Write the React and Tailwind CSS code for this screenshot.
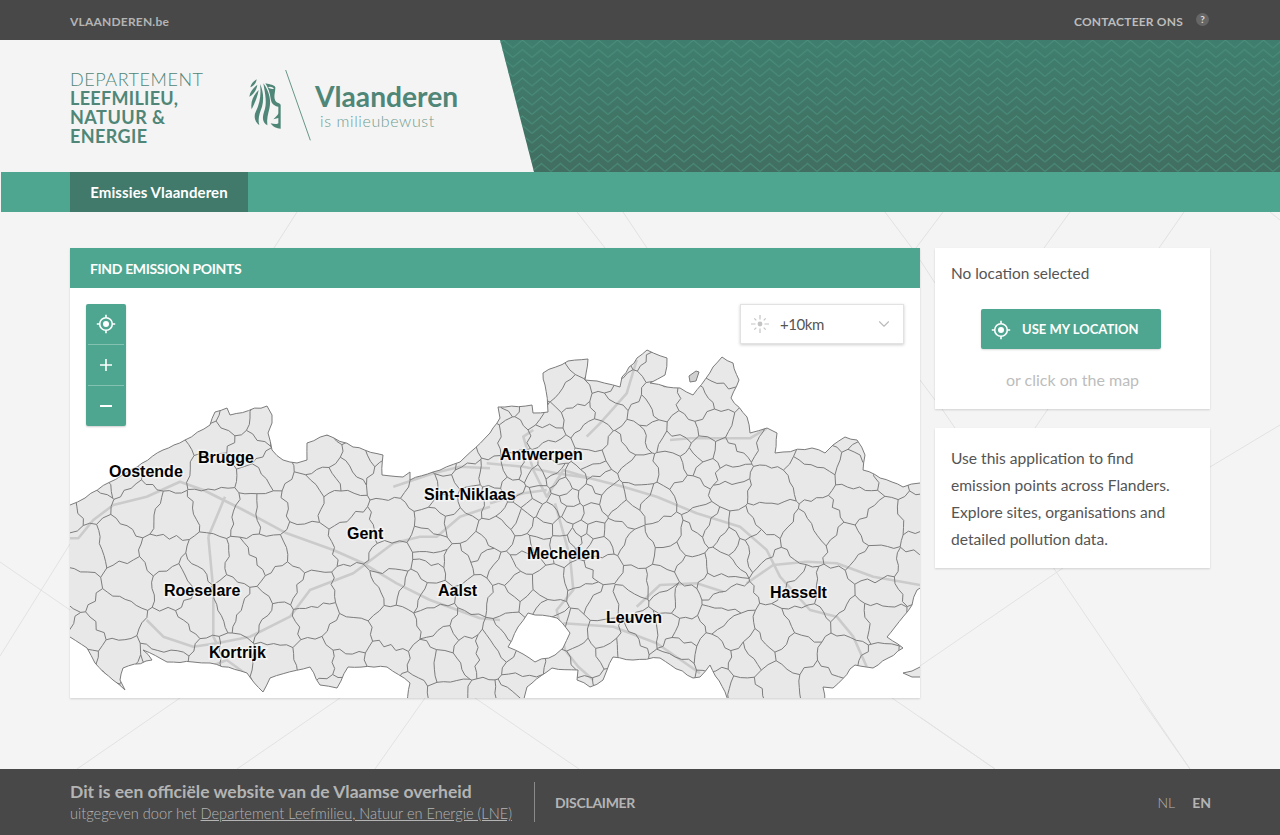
import React from "react";
import { ChevronDown } from "lucide-react";

function mulberry(a) {
  return () => {
    a |= 0; a = (a + 0x6d2b79f5) | 0;
    let t = Math.imul(a ^ (a >>> 15), 1 | a);
    t = (t + Math.imul(t ^ (t >>> 7), 61 | t)) ^ t;
    return ((t ^ (t >>> 14)) >>> 0) / 4294967296;
  };
}

const OUTLINE = [[70,505],[85,498],[110,482],[137,467],[163,450],[185,440],[210,425],[215,412],[227,408],[230,415],[267,406],[272,415],[272,423],[268,433],[272,450],[283,460],[297,463],[307,460],[307,443],[327,435],[353,447],[383,455],[382,475],[403,477],[410,472],[410,480],[433,472],[460,462],[490,433],[500,418],[498,407],[532,405],[533,413],[548,412],[545,385],[543,373],[568,361],[588,359],[585,380],[597,381],[620,387],[622,377],[637,358],[647,350],[667,358],[665,375],[650,383],[667,387],[680,388],[693,395],[713,367],[722,357],[733,363],[739,380],[731,398],[747,417],[750,433],[767,428],[777,433],[775,453],[783,452],[812,448],[825,453],[833,445],[845,437],[857,440],[865,455],[863,470],[892,482],[903,487],[920,483],[925,483],[925,585],[917,590],[912,605],[895,627],[887,637],[903,648],[873,668],[855,665],[833,688],[823,687],[825,703],[730,703],[710,665],[700,677],[693,678],[660,658],[633,660],[613,657],[607,670],[603,680],[590,687],[577,680],[578,670],[552,668],[527,687],[523,703],[407,703],[410,683],[387,667],[348,667],[337,688],[320,685],[310,667],[270,678],[263,692],[247,673],[210,663],[193,662],[167,662],[143,650],[152,660],[123,668],[120,680],[125,690],[113,680],[95,663],[87,648],[70,637],[65,637],[65,505]];
const HOLE = [[528,613],[557,618],[570,633],[563,648],[555,655],[535,662],[523,654],[508,647],[518,627]];
const ISLAND = [[903,673],[912,671],[920,667],[925,667],[925,677],[912,677]];
const ISLES = [[689,376],[696,371],[699,372],[696,381],[690,382]];

function wobblePath(pts, amp, seed) {
  const r = mulberry(seed);
  let d = "";
  pts.forEach((p, i) => {
    const q = pts[(i + 1) % pts.length];
    d += (i === 0 ? "M" : "L") + p[0] + " " + p[1];
    const len = Math.hypot(q[0] - p[0], q[1] - p[1]);
    const n = Math.floor(len / 6);
    for (let k = 1; k < n; k++) {
      const t = k / n;
      const o = (r() - 0.5) * 2 * amp;
      d += "L" + (p[0] + (q[0] - p[0]) * t - ((q[1] - p[1]) / len) * o).toFixed(1) + " " + (p[1] + (q[1] - p[1]) * t + ((q[0] - p[0]) / len) * o).toFixed(1);
    }
  });
  return d + "Z";
}

function makeCells() {
  const r = mulberry(23);
  const seeds = [];
  const inMed = (x, y) => x > 440 && x < 730 && y > 420 && y < 660;
  const inDense = (x, y) => x > 525 && x < 600 && y > 475 && y < 560;
  for (let y = 335; y < 720; y += 36)
    for (let x = 50; x < 940; x += 38)
      if (!inMed(x, y)) seeds.push([x + (r() - 0.5) * 36, y + (r() - 0.5) * 34]);
  for (let y = 420; y < 660; y += 26)
    for (let x = 440; x < 730; x += 28)
      if (!inDense(x, y)) seeds.push([x + (r() - 0.5) * 26, y + (r() - 0.5) * 24]);
  for (let y = 475; y < 560; y += 17)
    for (let x = 525; x < 600; x += 17)
      seeds.push([x + (r() - 0.5) * 14, y + (r() - 0.5) * 14]);
  const edges = new Map();
  seeds.forEach((s, i) => {
    let poly = [[40, 320], [950, 320], [950, 720], [40, 720]];
    seeds.forEach((o, j) => {
      if (i === j) return;
      const mx = (s[0] + o[0]) / 2, my = (s[1] + o[1]) / 2;
      const nx = o[0] - s[0], ny = o[1] - s[1];
      const side = (p) => (p[0] - mx) * nx + (p[1] - my) * ny;
      const out = [];
      poly.forEach((p, k) => {
        const q = poly[(k + 1) % poly.length];
        const a = side(p), b = side(q);
        if (a <= 0) out.push(p);
        if ((a < 0 && b > 0) || (a > 0 && b < 0)) {
          const t = a / (a - b);
          out.push([p[0] + (q[0] - p[0]) * t, p[1] + (q[1] - p[1]) * t]);
        }
      });
      poly = out;
    });
    poly.forEach((p, k) => {
      const q = poly[(k + 1) % poly.length];
      const a = p[0].toFixed(1) + "," + p[1].toFixed(1);
      const b = q[0].toFixed(1) + "," + q[1].toFixed(1);
      if (a === b) return;
      const key = a < b ? a + "|" + b : b + "|" + a;
      if (!edges.has(key)) edges.set(key, [p, q]);
    });
  });
  let d = "";
  edges.forEach(([p, q]) => {
    const len = Math.hypot(q[0] - p[0], q[1] - p[1]);
    const n = Math.max(1, Math.floor(len / 6));
    d += "M" + p[0].toFixed(1) + " " + p[1].toFixed(1);
    for (let k = 1; k <= n; k++) {
      const t = k / n;
      const o = k === n ? 0 : (r() - 0.5) * 5.5;
      d += "L" + (p[0] + (q[0] - p[0]) * t - ((q[1] - p[1]) / len) * o).toFixed(1) + " " + (p[1] + (q[1] - p[1]) * t + ((q[0] - p[0]) / len) * o).toFixed(1);
    }
  });
  return d;
}

const z3 = (a) => a.map(([x, y]) => [x / 3 + 70, y / 3 + 290]);
const z4 = (a) => a.map(([x, y]) => [x / 3 + 490, y / 3 + 290]);
const line = (a) => "M" + a.map((p) => p[0].toFixed(1) + " " + p[1].toFixed(1)).join("L");
const ROADS = [
  z3([[0,745],[25,745],[70,690],[130,645],[230,620],[330,575],[400,600],[520,660],[650,730],[790,780],[880,820],[980,880],[1080,930],[1230,985],[1290,990]]),
  z3([[415,740],[430,900],[430,1040],[440,1060]]),
  z3([[465,620],[440,680],[415,740]]),
  z3([[230,990],[280,1040],[370,1070],[440,1060],[540,1040],[660,980],[720,900],[850,850],[970,760],[1050,740],[1100,740],[1170,680],[1260,650]]),
  z3([[970,590],[1090,550],[1170,530],[1260,535]]),
  z3([[420,1130],[470,1110],[525,1150]]),
  z4([[-10,520],[100,530],[200,550],[300,565],[400,590],[500,620],[620,670],[750,710],[830,780],[870,860],[960,960],[1040,980],[1090,1040],[1130,1130]]),
  z4([[770,880],[850,825],[950,815],[1040,820],[1150,860],[1290,885]]),
  z4([[440,950],[510,885],[620,880],[700,905]]),
  z4([[220,1000],[370,1010],[500,1060],[630,1150]]),
  z4([[440,210],[410,310],[330,400],[290,440]]),
  z4([[540,450],[600,445],[780,445],[830,415]]),
  z4([[195,640],[240,800],[250,900],[200,960],[225,1080],[265,1130],[310,1170]]),
  z4([[130,420],[100,440],[130,540],[170,620],[220,540],[300,565]]),
  z4([[0,640],[100,610],[170,600]]),
];
const CELLS = makeCells();
const OUT_D = wobblePath(OUTLINE, 0.9, 3) + wobblePath(HOLE, 0.9, 4);
const LABELS = [
  ["Oostende", 109, 477], ["Brugge", 198, 463], ["Antwerpen", 500, 460], ["Sint-Niklaas", 424, 500],
  ["Gent", 347, 539], ["Mechelen", 527, 559], ["Roeselare", 164, 596], ["Aalst", 438, 596],
  ["Leuven", 606, 623], ["Hasselt", 770, 598], ["Kortrijk", 209, 658],
];

function MapDrawing() {
  return (
    <svg className="absolute inset-0" width="850" height="410" viewBox="70 288 850 410">
      <defs>
        <clipPath id="fl"><path d={OUT_D} clipRule="evenodd" /></clipPath>
      </defs>
      <path d={OUT_D} fill="#e8e8e8" fillRule="evenodd" />
      <path d={line(ISLAND) + "Z"} fill="#e8e8e8" stroke="#7b7b7b" />
      <path d={line(ISLES) + "Z"} fill="#d0d0d0" stroke="#7b7b7b" />
      <g clipPath="url(#fl)">
        <g fill="none" stroke="#cbcbcb" strokeWidth="2.6" strokeLinejoin="round">
          {ROADS.map((r, i) => <path key={i} d={line(r)} />)}
        </g>
        <path d={CELLS} fill="none" stroke="#7c7c7c" strokeWidth="1" />
      </g>
      <path d={OUT_D} fill="none" stroke="#7c7c7c" strokeWidth="1" />
      {LABELS.map(([t, x, y]) => (
        <text key={t} x={x} y={y} fontFamily="'Liberation Sans', Arial, sans-serif" fontWeight="700" fontSize="16" fill="#000" stroke="#fff" strokeOpacity="0.55" strokeWidth="3" style={{ paintOrder: "stroke" }}>{t}</text>
      ))}
    </svg>
  );
}

function Locate({ className }) {
  return (
    <svg className={className} viewBox="0 0 20 20" fill="none" stroke="currentColor">
      <circle cx="10" cy="10" r="6.3" strokeWidth="1.6" />
      <circle cx="10" cy="10" r="3" fill="currentColor" stroke="none" />
      <path d="M10 0.8V3.5M10 16.5V19.2M0.8 10H3.5M16.5 10H19.2" strokeWidth="1.6" />
    </svg>
  );
}

function Lion() {
  return (
    <svg width="66" height="75" viewBox="24 21 198 225" className="shrink-0" fill="none" stroke="#4f8677" strokeLinecap="round">
      <path d="M137 24L211 235" strokeWidth="2.6" strokeLinecap="butt" />
      <g fill="#4f8677" stroke="none">
        <path d="M50 52C40 58 33 66 31 76C40 72 49 64 50 52Z" />
        <path d="M52 68C40 78 30 90 28 104C40 98 50 84 52 68Z" />
        <path d="M56 84C42 98 30 118 35 142C44 124 52 106 56 84Z" />
        <path d="M60 66C64 96 60 124 47 150C40 164 46 182 58 190C52 170 60 150 66 134C72 112 70 86 60 66Z" />
        <path d="M70 64C76 100 82 124 72 150C66 168 68 182 82 190C80 170 84 156 88 140C94 116 88 88 70 64Z" />
        <path d="M76 64C92 68 102 68 106 76C106 92 100 104 106 116C110 124 122 122 122 130L122 200C110 200 98 194 92 184C100 186 112 188 115 184L115 168L100 172C106 164 115 160 115 152L115 134C104 132 94 126 92 110C90 92 84 76 76 64Z" />
      </g>
      <path d="M84 76C90 72 98 75 102 80C96 82 90 81 84 76Z" fill="#f4f4f4" stroke="none" />
    </svg>
  );
}

function Zigzag() {
  const zig = "L9.5 0L19 8";
  return (
    <svg className="absolute inset-0" width="1280" height="132" viewBox="0 0 1280 132">
      <defs>
        <pattern id="zz" width="19" height="9.5" patternUnits="userSpaceOnUse">
          <g fill="none" stroke="#4a8e7c" strokeWidth="1">
            <path d={"M0 8" + zig} transform="translate(0 -9.5)" />
            <path d={"M0 8" + zig} />
            <path d={"M0 8" + zig} transform="translate(0 9.5)" />
          </g>
        </pattern>
        <linearGradient id="zg" x1="0" x2="0" y1="0" y2="1">
          <stop offset="0" stopColor="#3f7e6e" />
          <stop offset="1" stopColor="#416e60" />
        </linearGradient>
      </defs>
      <polygon points="500,0 1280,0 1280,132 534,132" fill="url(#zg)" />
      <polygon points="500,0 1280,0 1280,132 534,132" fill="url(#zz)" />
    </svg>
  );
}

const BG = [[297,212,274,248],[577,212,605,248],[623,212,647,248],[885,212,912,248],[943,212,916,248],[1070,212,1044,248],[1184,212,1159,248],[1270,212,1290,228],[180,698,77,769],[340,698,237,769],[425,698,375,769],[475,698,579,769],[892,698,995,769],[1140,698,1190,769],[0,562,70,610],[70,544,0,656],[920,666,1063,568],[1040,548,1190,769],[920,717,995,769],[920,260,935,283],[920,380,935,400],[942,409,955,428],[1048,409,1035,428],[1210,467,1280,425]];

export default function App() {
  return (
    <div className="relative flex h-[835px] flex-col overflow-hidden bg-[#f4f4f4] font-['Lato','Noto_Sans',sans-serif] text-[#555]">
      <svg className="absolute inset-0" width="1280" height="835">
        {BG.map((l, i) => <line key={i} x1={l[0]} y1={l[1]} x2={l[2]} y2={l[3]} stroke="#e2e2e2" strokeWidth="1" />)}
      </svg>

      <div className="relative flex h-10 shrink-0 items-center justify-between bg-[#484848] pl-[70px] pr-[71px] pt-[3px]">
        <span className="text-[12px] font-bold tracking-[0.2px] text-[#b4b4b4]">VLAANDEREN.be</span>
        <div className="flex items-center">
          <span className="text-[12px] font-bold tracking-[0.2px] text-[#bcbcbc]">CONTACTEER ONS</span>
          <span className="ml-[13px] mb-[5px] flex h-[13px] w-[13px] items-center justify-center rounded-full bg-[#666] text-[10px] font-bold leading-none text-[#ddd]">?</span>
        </div>
      </div>

      <div className="relative flex h-[132px] shrink-0 items-center bg-[#f4f4f4] pl-[70px]">
        <Zigzag />
        <div className="relative mt-[3px] w-[178px] text-[18px] leading-[19px] text-[#4f8677]">
          <div className="font-light tracking-[0.55px]">DEPARTEMENT</div>
          <div className="font-bold tracking-[0.3px]">LEEFMILIEU,</div>
          <div className="font-bold tracking-[0.5px]">NATUUR &amp;</div>
          <div className="font-bold tracking-[0.4px]">ENERGIE</div>
        </div>
        <div className="relative flex items-center">
          <Lion />
          <div className="ml-[1px] mt-[-3px] text-[#4f8677]">
            <div className="text-[28.2px] font-bold leading-[32px]">Vlaanderen</div>
            <div className="ml-[5px] text-[16px] font-light leading-[18px] tracking-[0.6px] text-[#6f9c90]">is milieubewust</div>
          </div>
        </div>
      </div>

      <div className="relative ml-px flex h-10 shrink-0 bg-[#4ea690] pl-[69px]">
        <div className="flex h-full w-[178px] items-center justify-center bg-[#41796b] text-[15px] font-bold tracking-[0.1px] text-white">Emissies Vlaanderen</div>
      </div>

      <div className="relative flex flex-1 items-start gap-[15px] pl-[70px] pt-9">
        <div className="w-[850px] bg-white shadow-[0_1px_2px_rgba(0,0,0,0.15)]">
          <div className="flex h-10 items-center bg-[#4ea690] px-5 text-[14px] font-bold tracking-[-0.35px] text-white">FIND EMISSION POINTS</div>
          <div className="relative h-[410px]">
            <MapDrawing />
            <div className="absolute left-4 top-4 flex w-10 flex-col rounded-[2px] bg-[#4ea690] text-white shadow-[0_1px_2px_rgba(0,0,0,0.2)]">
              <div className="flex h-10 items-center justify-center"><Locate className="h-5 w-5" /></div>
              <div className="mx-0.5 h-px bg-white/30" />
              <div className="flex h-10 items-center justify-center">
                <svg width="14" height="14" viewBox="0 0 14 14"><path d="M7 1V13M1 7H13" stroke="#fff" strokeWidth="1.6" /></svg>
              </div>
              <div className="mx-0.5 h-px bg-white/30" />
              <div className="flex h-10 items-center justify-center">
                <svg width="14" height="14" viewBox="0 0 14 14"><path d="M1 7H13" stroke="#fff" strokeWidth="2" /></svg>
              </div>
            </div>
            <div className="absolute right-4 top-4 flex h-10 w-[164px] items-center border border-[#e2e2e2] bg-white pl-[10px] pr-[10px] shadow-[0_1px_3px_rgba(0,0,0,0.2)]">
              <svg width="18" height="18" viewBox="0 0 18 18" stroke="#c4c4c4" strokeWidth="1.2">
                <circle cx="9" cy="9" r="2.4" fill="#c4c4c4" stroke="none" />
                <path d="M9 0V4.5M9 13.5V18M0 9H4.5M13.5 9H18M3.3 3.3L5.3 5.3M12.7 12.7L14.7 14.7M14.7 3.3L12.7 5.3M5.3 12.7L3.3 14.7" />
              </svg>
              <span className="ml-[11px] text-[15px] tracking-[-0.45px] text-[#555]">+10km</span>
              <ChevronDown className="ml-auto h-[18px] w-[18px] text-[#bbb]" strokeWidth={1.5} />
            </div>
          </div>
        </div>

        <div className="flex w-[275px] flex-col gap-[19px]">
          <div className="h-[161px] bg-white px-4 pt-3 shadow-[0_1px_2px_rgba(0,0,0,0.15)]">
            <div className="text-[15.4px] leading-[26px]">No location selected</div>
            <div className="ml-[30px] mt-[23px] flex">
              <div className="flex h-10 w-[180px] items-center rounded-[2px] bg-[#4ea690] pl-[10px] pt-px text-white shadow-[0_1px_2px_rgba(0,0,0,0.15)]">
                <Locate className="h-5 w-5" />
                <span className="ml-[11px] text-[13px] font-bold">USE MY LOCATION</span>
              </div>
            </div>
            <div className="mt-[18px] text-center text-[16px] leading-[26px] text-[#bdbdbd]">or click on the map</div>
          </div>
          <div className="h-[140px] bg-white px-4 pt-[17px] text-[15.6px] leading-[27px] shadow-[0_1px_2px_rgba(0,0,0,0.15)]">
            Use this application to find<br />emission points across Flanders.<br />Explore sites, organisations and<br />detailed pollution data.
          </div>
        </div>
      </div>

      <div className="relative flex h-[66px] shrink-0 items-center bg-[#484848] pl-[70px] pr-[69px] text-[#b4b4b4]">
        <div className="mb-[2px]">
          <div className="text-[17.5px] font-bold leading-[24px]">Dit is een officiële website van de Vlaamse overheid</div>
          <div className="text-[14.6px] font-light leading-[19px]">uitgegeven door het <span className="underline">Departement Leefmilieu, Natuur en Energie (LNE)</span></div>
        </div>
        <div className="ml-[22px] h-10 w-px bg-[#8a8a8a]" />
        <div className="ml-5 text-[14px] font-bold tracking-[-0.3px]">DISCLAIMER</div>
        <div className="ml-auto flex gap-[17px] text-[14px]">
          <span className="font-light text-[#b4b4b4]">NL</span>
          <span className="font-bold">EN</span>
        </div>
      </div>
    </div>
  );
}
